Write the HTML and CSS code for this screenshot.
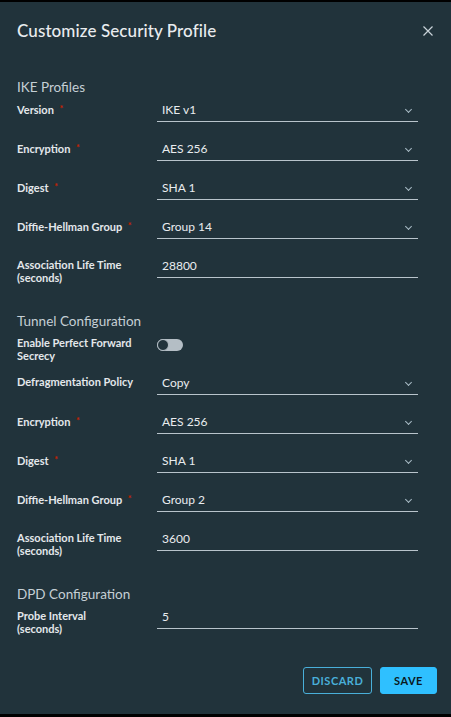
FILE: index.html
```html
<!DOCTYPE html>
<html>
<head>
<meta charset="utf-8">
<link rel="stylesheet" href="styles.css">
</head>
<body>
<div class="modal">
  <div class="modal-header">
    <h1 class="title">Customize Security Profile</h1>
    <button class="close" aria-label="Close">
      <svg width="10" height="10" viewBox="0 0 10 10"><path d="M0.5 0.5 L9.5 9.5 M9.5 0.5 L0.5 9.5" stroke="#c9d3d9" stroke-width="1.2" fill="none"/></svg>
    </button>
  </div>

  <div class="modal-body">
    <h2 class="section first">IKE Profiles</h2>
    <div class="row"><label class="lbl">Version <span class="req">*</span></label><div class="ctrl select"><span class="val">IKE v1</span><span class="chev"></span></div></div>
    <div class="row"><label class="lbl">Encryption <span class="req">*</span></label><div class="ctrl select"><span class="val">AES 256</span><span class="chev"></span></div></div>
    <div class="row"><label class="lbl">Digest <span class="req">*</span></label><div class="ctrl select"><span class="val">SHA 1</span><span class="chev"></span></div></div>
    <div class="row"><label class="lbl">Diffie-Hellman Group <span class="req">*</span></label><div class="ctrl select"><span class="val">Group 14</span><span class="chev"></span></div></div>
    <div class="row"><label class="lbl">Association Life Time (seconds)</label><div class="ctrl input"><span class="val">28800</span></div></div>

    <h2 class="section">Tunnel Configuration</h2>
    <div class="row"><label class="lbl">Enable Perfect Forward Secrecy</label><div class="ctrl plain"><span class="toggle"><span class="knob"></span></span></div></div>
    <div class="row"><label class="lbl">Defragmentation Policy</label><div class="ctrl select"><span class="val">Copy</span><span class="chev"></span></div></div>
    <div class="row"><label class="lbl">Encryption <span class="req">*</span></label><div class="ctrl select"><span class="val">AES 256</span><span class="chev"></span></div></div>
    <div class="row"><label class="lbl">Digest <span class="req">*</span></label><div class="ctrl select"><span class="val">SHA 1</span><span class="chev"></span></div></div>
    <div class="row"><label class="lbl">Diffie-Hellman Group <span class="req">*</span></label><div class="ctrl select"><span class="val">Group 2</span><span class="chev"></span></div></div>
    <div class="row"><label class="lbl">Association Life Time (seconds)</label><div class="ctrl input"><span class="val">3600</span></div></div>

    <h2 class="section">DPD Configuration</h2>
    <div class="row"><label class="lbl">Probe Interval<br>(seconds)</label><div class="ctrl input"><span class="val">5</span></div></div>
  </div>

  <div class="modal-footer">
    <button class="btn btn-outline">DISCARD</button>
    <button class="btn btn-primary">SAVE</button>
  </div>
</div>
</body>
</html>
```

FILE: styles.css
```css
html, body {
  margin: 0;
  padding: 0;
  background: #000;
}
body {
  padding: 2px 0 3px;
  font-family: Lato, "Open Sans", sans-serif;
}
.modal {
  background: #21333b;
  height: 712px;
  box-sizing: border-box;
  padding: 19px 14px 0 17px;
  display: flex;
  flex-direction: column;
}
.modal-header {
  display: flex;
  justify-content: space-between;
  align-items: center;
  height: 20px;
}
.title {
  margin: 0;
  font-size: 17px;
  font-weight: 500;
  color: #e9ecef;
  line-height: 20px;
  letter-spacing: 0.1px;
}
.close {
  background: none;
  border: 0;
  padding: 0;
  margin-right: 4px;
  width: 10px;
  height: 10px;
  display: flex;
}
.modal-body {
  padding-top: 38px;
}
.section {
  margin: 35px 0 4px;
  font-size: 13.5px;
  font-weight: 400;
  line-height: 16px;
  height: 16px;
  color: #c5cfd5;
}
.section.first {
  margin-top: 0;
}
.row {
  display: grid;
  grid-template-columns: 140px 261px;
  height: 23px;
  margin-bottom: 16px;
}
.row:last-child {
  margin-bottom: 0;
}
.lbl {
  padding-top: 4px;
  font-size: 11px;
  font-weight: 700;
  line-height: 12.5px;
  color: #e4e8eb;
  padding-right: 10px;
}
.req {
  color: #c92100;
  font-size: 9px;
  vertical-align: 2px;
  margin-left: 3px;
}
.ctrl {
  height: 23px;
  box-sizing: border-box;
  border-bottom: 1px solid #b8c4cb;
  display: flex;
  align-items: center;
  padding-left: 5px;
  position: relative;
}
.ctrl.plain {
  border-bottom: 0;
  padding-left: 0;
}
.val {
  font-size: 12px;
  color: #e9ecef;
  line-height: 22px;
}
.chev {
  position: absolute;
  right: 7px;
  top: 8px;
  width: 4px;
  height: 4px;
  border-right: 1.3px solid #a9bcc6;
  border-bottom: 1.3px solid #a9bcc6;
  transform: rotate(45deg);
}
.toggle {
  width: 26px;
  height: 12px;
  border-radius: 6px;
  background: #b4bec5;
  position: relative;
  margin-top: 1px;
}
.knob {
  position: absolute;
  left: 0;
  top: 0;
  width: 12px;
  height: 12px;
  box-sizing: border-box;
  border-radius: 50%;
  background: #21333b;
  border: 1.5px solid #b4bec5;
}
.modal-footer {
  display: flex;
  justify-content: flex-end;
  gap: 8px;
  margin-top: 38px;
}
.btn {
  height: 27px;
  box-sizing: border-box;
  border-radius: 3px;
  font-family: Lato, sans-serif;
  font-size: 11px;
  font-weight: 700;
  letter-spacing: 0.5px;
  padding: 0;
  cursor: pointer;
}
.btn-outline {
  width: 69px;
  background: transparent;
  border: 1px solid #49afd9;
  color: #49afd9;
}
.btn-primary {
  width: 57px;
  background: #2fc0ff;
  border: 1px solid #2fc0ff;
  color: #0b1a21;
}
```
